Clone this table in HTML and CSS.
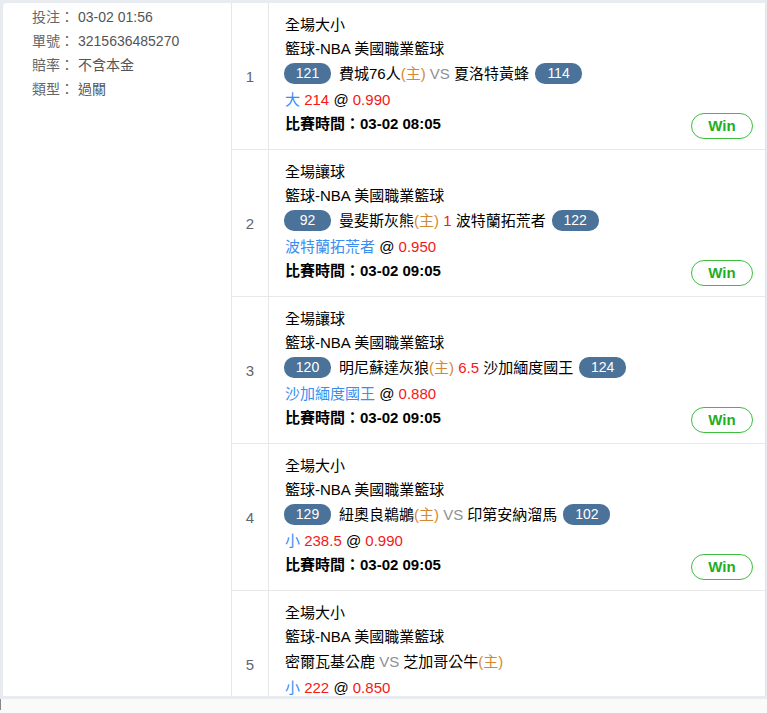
FILE: index.html
```html
<!DOCTYPE html>
<html lang="zh-Hant">
<head>
    <meta charset="UTF-8">
    <meta name="viewport" content="width=device-width, initial-scale=1.0">
    <title>注單詳情</title>
    <link rel="stylesheet" href="styles.css">
</head>
<body>
    <div class="card">
        <div class="info">
            <div class="info-row"><span class="info-label">投注：</span><span class="info-value">03-02 01:56</span></div>
            <div class="info-row"><span class="info-label">單號：</span><span class="info-value">3215636485270</span></div>
            <div class="info-row"><span class="info-label">賠率：</span><span class="info-value">不含本金</span></div>
            <div class="info-row"><span class="info-label">類型：</span><span class="info-value">過關</span></div>
        </div>

        <div class="bets">
            <div class="bet">
                <div class="bet-no">1</div>
                <div class="bet-body">
                    <div class="line title">全場大小</div>
                    <div class="line">籃球-NBA 美國職業籃球</div>
                    <div class="line teams">
                        <span class="score score-left">121</span>費城76人<span class="home">(主)</span> <span class="vs">VS</span> 夏洛特黃蜂<span class="score score-right">114</span>
                    </div>
                    <div class="line"><span class="pick">大</span> <span class="red">214</span> @ <span class="red">0.990</span></div>
                    <div class="line time-line">
                        <span class="time">比賽時間：03-02 08:05</span>
                        <span class="result">Win</span>
                    </div>
                </div>
            </div>

            <div class="bet">
                <div class="bet-no">2</div>
                <div class="bet-body">
                    <div class="line title">全場讓球</div>
                    <div class="line">籃球-NBA 美國職業籃球</div>
                    <div class="line teams">
                        <span class="score score-left">92</span>曼斐斯灰熊<span class="home">(主)</span> <span class="red">1</span> 波特蘭拓荒者<span class="score score-right">122</span>
                    </div>
                    <div class="line"><span class="pick">波特蘭拓荒者</span> @ <span class="red">0.950</span></div>
                    <div class="line time-line">
                        <span class="time">比賽時間：03-02 09:05</span>
                        <span class="result">Win</span>
                    </div>
                </div>
            </div>

            <div class="bet">
                <div class="bet-no">3</div>
                <div class="bet-body">
                    <div class="line title">全場讓球</div>
                    <div class="line">籃球-NBA 美國職業籃球</div>
                    <div class="line teams">
                        <span class="score score-left">120</span>明尼蘇達灰狼<span class="home">(主)</span> <span class="red">6.5</span> 沙加緬度國王<span class="score score-right">124</span>
                    </div>
                    <div class="line"><span class="pick">沙加緬度國王</span> @ <span class="red">0.880</span></div>
                    <div class="line time-line">
                        <span class="time">比賽時間：03-02 09:05</span>
                        <span class="result">Win</span>
                    </div>
                </div>
            </div>

            <div class="bet">
                <div class="bet-no">4</div>
                <div class="bet-body">
                    <div class="line title">全場大小</div>
                    <div class="line">籃球-NBA 美國職業籃球</div>
                    <div class="line teams">
                        <span class="score score-left">129</span>紐奧良鵜鶘<span class="home">(主)</span> <span class="vs">VS</span> 印第安納溜馬<span class="score score-right">102</span>
                    </div>
                    <div class="line"><span class="pick">小</span> <span class="red">238.5</span> @ <span class="red">0.990</span></div>
                    <div class="line time-line">
                        <span class="time">比賽時間：03-02 09:05</span>
                        <span class="result">Win</span>
                    </div>
                </div>
            </div>

            <div class="bet">
                <div class="bet-no">5</div>
                <div class="bet-body">
                    <div class="line title">全場大小</div>
                    <div class="line">籃球-NBA 美國職業籃球</div>
                    <div class="line teams">密爾瓦基公鹿 <span class="vs">VS</span> 芝加哥公牛<span class="home">(主)</span></div>
                    <div class="line"><span class="pick">小</span> <span class="red">222</span> @ <span class="red">0.850</span></div>
                    <div class="line time-line">
                        <span class="time">比賽時間：03-02 09:05</span>
                    </div>
                </div>
            </div>
        </div>
    </div>
    <div class="footer"><span class="footer-mark"></span></div>
</body>
</html>
```

FILE: styles.css
```css
html, body {
    margin: 0;
    padding: 0;
}
body {
    font-family: "Liberation Sans", "Noto Sans CJK TC", sans-serif;
    background: #e8ecf1;
    color: #000;
    overflow: hidden;
}
.card {
    display: flex;
    margin: 3px 1px 0 3px;
    height: 693px;
    overflow: hidden;
    background: #fff;
    border-right: 1px solid #e4e4e4;
    border-top-left-radius: 4px;
}
.info {
    width: 229px;
    flex-shrink: 0;
    padding: 2px 0 0 29px;
    box-sizing: border-box;
    border-right: 1px solid #e8e8e8;
}
.info-row {
    font-size: 14px;
    line-height: 24px;
    color: #666;
    white-space: nowrap;
}
.info-label {
    margin-right: 4px;
}
.info-value {
    color: #555;
}
.bets {
    flex: 1;
}
.bet {
    display: flex;
    border-bottom: 1px solid #e8e8e8;
}
.bet-no {
    width: 36px;
    flex-shrink: 0;
    border-right: 1px solid #e8e8e8;
    display: flex;
    align-items: center;
    justify-content: center;
    font-size: 15px;
    color: #5f6670;
}
.bet-body {
    flex: 1;
    padding: 10px 12px 13px 16px;
    font-size: 15px;
}
.line {
    line-height: 24px;
    height: 24px;
    white-space: nowrap;
}
.teams {
    height: 27px;
    line-height: 26px;
}
.score {
    display: inline-block;
    width: 47px;
    height: 21px;
    line-height: 21px;
    border-radius: 10px;
    background: #4b7298;
    color: #fff;
    text-align: center;
    font-size: 14px;
    vertical-align: 1px;
}
.score-left {
    margin-right: 8px;
    margin-left: -1px;
}
.score-right {
    margin-left: 6px;
}
.home {
    color: #d5892e;
}
.vs {
    color: #8d9096;
}
.pick {
    color: #3a8ef0;
}
.red {
    color: #f51818;
}
.time-line {
    display: flex;
    justify-content: space-between;
    align-items: center;
}
.time {
    font-weight: bold;
}
.result {
    box-sizing: border-box;
    width: 62px;
    height: 26px;
    line-height: 24px;
    margin-top: 3px;
    border: 1px solid #3cbe3c;
    border-radius: 13px;
    text-align: center;
    color: #1fae1f;
    font-weight: bold;
    font-size: 15px;
}
.footer {
    height: 17px;
    background: #fafafa;
}
.footer-mark {
    display: block;
    width: 1px;
    height: 11px;
    margin-top: 3px;
    background: #888;
}
```
